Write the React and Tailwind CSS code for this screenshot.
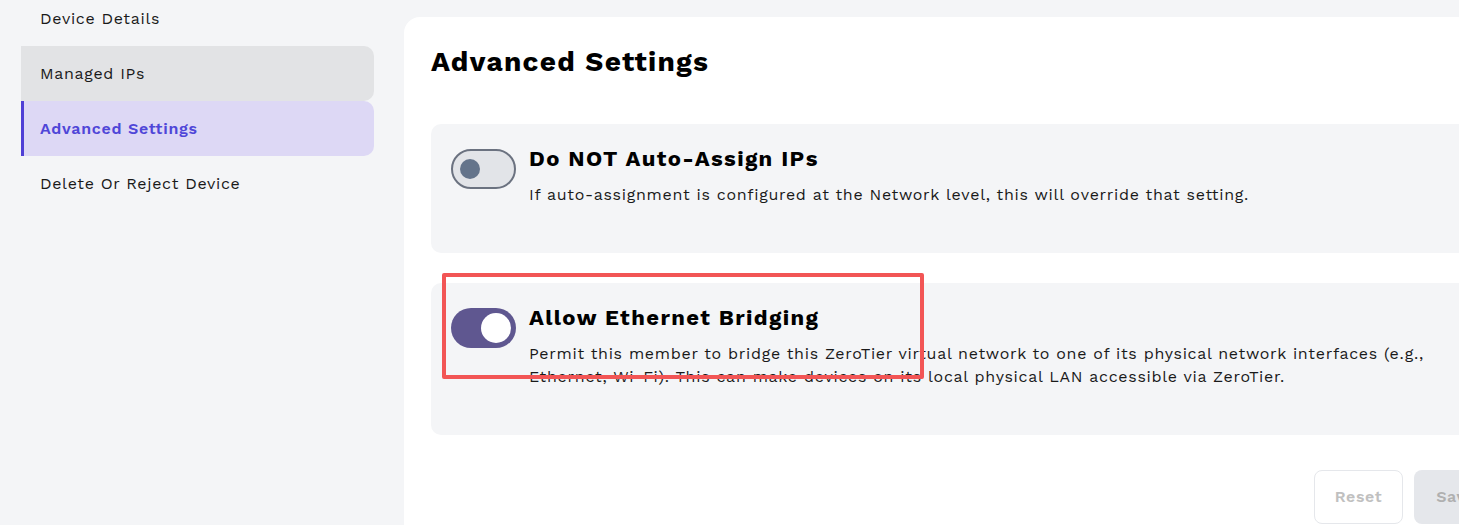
import React from 'react'

const font = { fontFamily: '"Work Sans", Inter, "Noto Sans", sans-serif' }

function Toggle({ on }) {
  if (on) {
    return (
      <div className="mt-[4px] flex h-[40px] w-[65px] shrink-0 items-center justify-end rounded-full bg-[#5f5790] pr-[5px]">
        <div className="h-[30px] w-[30px] rounded-full bg-white"></div>
      </div>
    )
  }
  return (
    <div className="mt-[4px] flex h-[40px] w-[65px] shrink-0 items-center rounded-full border-2 border-[#6b7280] bg-[#e2e4e8] pl-[7px]">
      <div className="h-[20px] w-[20px] rounded-full bg-[#64748b]"></div>
    </div>
  )
}

function SettingCard({ on, title, children }) {
  return (
    <div className="flex items-start gap-[13px] rounded-[10px] bg-[#f4f5f7] pl-[20px] pr-[20px] pt-[21px] pb-[47px]">
      <Toggle on={on} />
      <div>
        <div className="text-[22px] font-bold leading-[28px] tracking-[0.062em] text-black">{title}</div>
        <p className="mt-[10px] text-[16px] leading-[23px] tracking-[0.044em] text-[#1a1a1a]">{children}</p>
      </div>
    </div>
  )
}

export default function App() {
  const items = ['Device Details', 'Managed IPs', 'Advanced Settings', 'Delete Or Reject Device']
  return (
    <div style={font} className="flex h-[525px] w-full overflow-hidden bg-[#f4f5f7]">
      <div className="-mt-[9px] flex w-[404px] shrink-0 flex-col pl-[21px] pr-[30px]">
        {items.map((item, i) => (
          <div
            key={item}
            className={
              i === 1
                ? 'flex h-[55px] items-center rounded-r-[10px] bg-[#e2e3e5] pl-[19px] text-[16px] tracking-[0.042em] text-[#1a1a1a]'
                : i === 2
                ? 'flex h-[55px] items-center rounded-r-[10px] border-l-[3px] border-[#4f3fd6] bg-[#ddd8f5] pl-[16px] text-[16px] font-semibold tracking-[0.045em] text-[#4f46d8]'
                : 'flex h-[55px] items-center pl-[19px] text-[16px] tracking-[0.042em] text-[#1a1a1a]'
            }
          >
            {item}
          </div>
        ))}
      </div>

      <div className="relative mt-[17px] w-[1121px] shrink-0 rounded-tl-[16px] bg-white px-[27px] pt-[27px]">
        <h1 className="text-[28px] font-bold leading-[36px] tracking-[0.046em] text-black">Advanced Settings</h1>

        <div className="mt-[44px] flex flex-col gap-[30px]">
          <SettingCard on={false} title="Do NOT Auto-Assign IPs">
            If auto-assignment is configured at the Network level, this will override that setting.
          </SettingCard>
          <SettingCard on={true} title="Allow Ethernet Bridging">
            Permit this member to bridge this ZeroTier virtual network to one of its physical network interfaces (e.g., Ethernet, Wi-Fi). This can make devices on its local physical LAN accessible via ZeroTier.
          </SettingCard>
        </div>

        <div className="mt-[35px] flex justify-end gap-[11px]">
          <button className="h-[54px] w-[89px] rounded-[8px] border border-[#e5e7eb] bg-white text-[16px] font-semibold tracking-[0.04em] text-[#c0c0c0]">
            Reset
          </button>
          <button className="h-[54px] w-[84px] rounded-[8px] bg-[#e5e7eb] text-[16px] font-semibold tracking-[0.04em] text-[#b0b0b0]">
            Save
          </button>
        </div>

        <div className="pointer-events-none absolute left-[38px] top-[256px] h-[106px] w-[482px] rounded-[2px] border-4 border-[#f25555]"></div>
      </div>
    </div>
  )
}
